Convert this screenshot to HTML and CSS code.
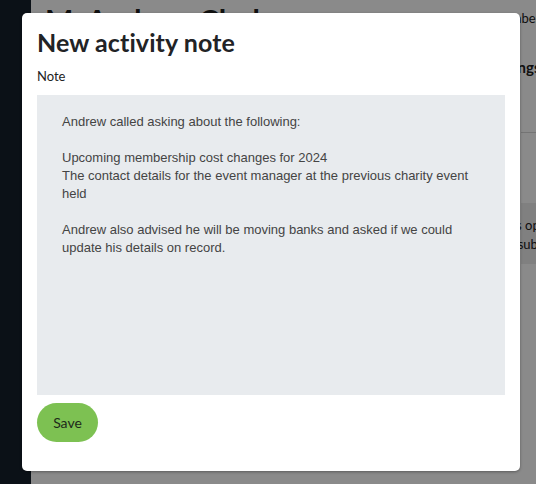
FILE: index.html
```html
<!DOCTYPE html>
<html lang="en">
<head>
<meta charset="utf-8">
<title>New activity note</title>
<link rel="stylesheet" href="styles.css">
</head>
<body>
<div class="app">
  <aside class="sidebar"></aside>
  <main class="page">
    <div class="page-main">
      <h1 class="page-title">M. Andrew Clarke</h1>
    </div>
    <div class="page-side">
      <p class="side-meta">Member since 2019</p>
      <h2 class="side-title">Settings</h2>
      <hr class="side-rule">
      <div class="side-box">
        <p>Contacts opted in</p>
        <p>Newsletter subscriber</p>
      </div>
    </div>
  </main>
</div>
<div class="overlay"></div>
<section class="modal" role="dialog" aria-labelledby="modal-title">
  <h2 id="modal-title" class="modal-title">New activity note</h2>
  <label class="field-label" for="note">Note</label>
  <textarea id="note" class="note-input">Andrew called asking about the following:

Upcoming membership cost changes for 2024
The contact details for the event manager at the previous charity event held

Andrew also advised he will be moving banks and asked if we could update his details on record.</textarea>
  <div class="actions">
    <button class="btn-save" type="button">Save</button>
  </div>
</section>
</body>
</html>
```
FILE: styles.css
```css
* { box-sizing: border-box; }
html, body { margin: 0; padding: 0; }
body {
  width: 536px;
  height: 484px;
  overflow: hidden;
  font-family: Lato, "Open Sans", sans-serif;
  background: #fff;
  position: relative;
}
.app {
  display: flex;
  height: 484px;
}
.sidebar {
  width: 31px;
  flex: none;
  background: #15212c;
}
.page {
  flex: 1;
  display: flex;
  background: #fff;
  overflow: hidden;
}
.page-main {
  width: 490px;
  flex: none;
  padding: 0 0 0 14px;
}
.page-title {
  margin: 2px 0 0;
  font-size: 30px;
  font-weight: 700;
  color: #202020;
  white-space: nowrap;
}
.page-side {
  flex: none;
  width: 200px;
  padding-top: 10px;
}
.side-meta {
  margin: 0;
  font-size: 13px;
  color: #202020;
  white-space: nowrap;
  text-indent: -29px;
}
.side-title {
  margin: 32px 0 0;
  font-size: 15px;
  font-weight: 700;
  color: #202020;
  white-space: nowrap;
  text-indent: -34px;
}
.side-rule {
  margin: 56px 0 0;
  border: 0;
  border-top: 1px solid #d6d6d6;
}
.side-box {
  margin-top: 70px;
  height: 61px;
  background: #ececec;
  padding-top: 14px;
  font-size: 13px;
  color: #202020;
  text-indent: -50px;
  white-space: nowrap;
}
.side-box p { margin: 0 0 3px; line-height: 16px; }
.side-box p:last-child { text-indent: -69px; }
.overlay {
  position: absolute;
  inset: 0;
  background: rgba(0, 0, 0, 0.46);
}
.modal {
  position: absolute;
  left: 22px;
  top: 13px;
  width: 498px;
  height: 458px;
  background: #fff;
  border-radius: 5px;
  box-shadow: 0 1px 3px rgba(0, 0, 0, 0.35);
  padding: 13px 15px 0;
  display: flex;
  flex-direction: column;
}
.modal-title {
  margin: 0;
  font-size: 25px;
  line-height: 32px;
  font-weight: 700;
  color: #222326;
  letter-spacing: 0.1px;
}
.field-label {
  margin-top: 10px;
  font-size: 13px;
  line-height: 17px;
  color: #222;
}
.note-input {
  margin-top: 10px;
  width: 468px;
  height: 300px;
  border: 0;
  background: #e8ebee;
  resize: none;
  padding: 18px 25px 0;
  font-family: "Liberation Sans", Arial, sans-serif;
  font-size: 13px;
  line-height: 18px;
  color: #444;
  outline: none;
  overflow: hidden;
}
.actions {
  margin-top: 8px;
  display: flex;
}
.btn-save {
  width: 61px;
  height: 39px;
  border: 0;
  border-radius: 20px;
  background: #7dc152;
  font-family: Lato, "Open Sans", sans-serif;
  font-size: 14px;
  color: #1d2a1a;
  padding: 0;
  cursor: pointer;
}
```
